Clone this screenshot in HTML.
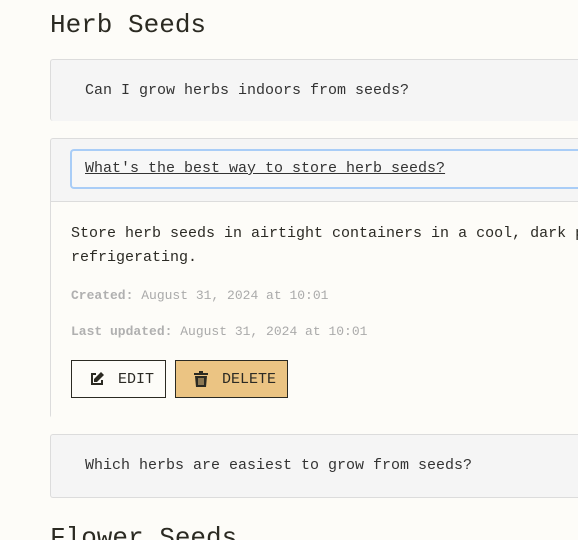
<!DOCTYPE html>
<html style="overflow:hidden"><head><style>
html,body{overflow:hidden}
body{margin:0;background:#fdfcf8;font-family:"Liberation Mono",monospace;color:#2b2a24;width:578px;height:540px;position:relative}
.h{position:absolute;left:50px;font-size:26px;margin:0;font-weight:normal;color:#2b2a22}
.card{position:absolute;left:50px;width:528px;background:#f5f5f5;border:1px solid #dcdcdc;border-right:none;border-radius:3px 0 0 3px;box-sizing:border-box}
.q{position:absolute;left:34px;font-size:15px;color:#333}
.input{position:absolute;left:19px;top:10px;width:509px;height:40px;border:2px solid #a9cdf7;border-right:none;border-radius:4px 0 0 4px;background:#f7f7f7;box-sizing:border-box}
.body{position:absolute;left:0;top:62px;width:527px;height:217px;background:#fdfcf8;border-top:1px solid #dcdcdc}
.meta{position:absolute;left:20px;font-size:13px;color:#aaa}
.meta b{color:#b0b0b0}
.btn{position:absolute;top:158px;height:38px;border:1px solid #2b2a22;box-sizing:border-box;font-size:15px;display:flex;align-items:center}
</style></head><body>
<h1 class="h" style="top:10px">Herb Seeds</h1>
<div class="card" style="top:59px;height:62px;border-bottom:none"><div class="q" style="top:22px">Can I grow herbs indoors from seeds?</div></div>
<div class="card" style="top:138px;height:280px;border-bottom:none">
<div class="input"><div style="position:absolute;left:13px;top:9px;font-size:15px;text-decoration:underline;color:#333;white-space:nowrap">What's the best way to store herb seeds?</div></div>
<div class="body">
<div style="position:absolute;left:20px;top:20px;font-size:15px;line-height:24px;white-space:nowrap;color:#2b2a24">Store herb seeds in airtight containers in a cool, dark p<br>refrigerating.</div>
<div class="meta" style="top:86px"><b>Created:</b> August 31, 2024 at 10:01</div>
<div class="meta" style="top:122px"><b>Last updated:</b> August 31, 2024 at 10:01</div>
<div class="btn" style="left:20px;width:95px;background:#fdfcf8">
<svg style="margin-left:17px" width="16" height="16" viewBox="0 0 16 16"><path d="M7 3H3v10h10V9" fill="none" stroke="#2b2a22" stroke-width="2"/><path d="M12 1l3 3-7 7H5V8z" fill="#2b2a22"/></svg>
<span style="margin-left:13px">EDIT</span></div>
<div class="btn" style="left:124px;width:113px;background:#ebc483">
<svg style="margin-left:18px" width="14" height="16" viewBox="0 0 14 16"><rect x="0" y="2" width="14" height="2" fill="#2b2a22"/><rect x="5" y="0" width="4" height="2" fill="#2b2a22"/><path d="M1 5h12l-1 11H2z" fill="#2b2a22"/><path d="M5 7v7M7 7v7M9 7v7" stroke="#ebc483" stroke-width="1"/></svg>
<span style="margin-left:14px">DELETE</span></div>
</div></div>
<div class="card" style="top:434px;height:64px"><div class="q" style="top:22px">Which herbs are easiest to grow from seeds?</div></div>
<h1 class="h" style="top:523px">Flower Seeds</h1>
</body></html>
